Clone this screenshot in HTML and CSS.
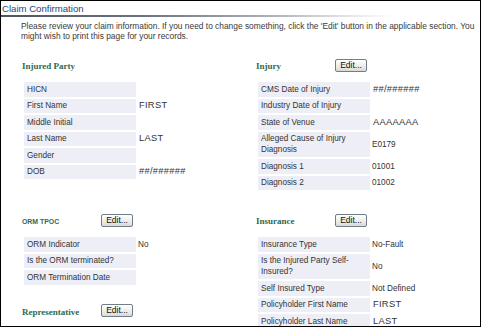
FILE: index.html
```html
<!DOCTYPE html>
<html lang="en">
<head>
<meta charset="utf-8">
<title>Claim Confirmation</title>
<link rel="stylesheet" href="styles.css">
</head>
<body>
<div class="title-bar">Claim Confirmation</div>
<div class="title-rule"></div>
<p class="intro">Please review your claim information. If you need to change something, click the 'Edit' button in the applicable section. You might wish to print this page for your records.</p>

<div class="sections">
  <section class="section">
    <div class="sec-head"><span class="sec-title">Injured Party</span></div>
    <table class="info">
      <tr><td class="lbl">HICN</td><td class="val"></td></tr>
      <tr><td class="lbl">First Name</td><td class="val big">FIRST</td></tr>
      <tr><td class="lbl">Middle Initial</td><td class="val"></td></tr>
      <tr><td class="lbl">Last Name</td><td class="val big">LAST</td></tr>
      <tr><td class="lbl">Gender</td><td class="val"></td></tr>
      <tr><td class="lbl">DOB</td><td class="val big">##/######</td></tr>
    </table>
  </section>

  <section class="section">
    <div class="sec-head"><span class="sec-title">Injury</span><button class="edit-btn" type="button">Edit...</button></div>
    <table class="info">
      <tr><td class="lbl">CMS Date of Injury</td><td class="val big">##/######</td></tr>
      <tr><td class="lbl">Industry Date of Injury</td><td class="val"></td></tr>
      <tr><td class="lbl">State of Venue</td><td class="val big">AAAAAAA</td></tr>
      <tr><td class="lbl">Alleged Cause of Injury Diagnosis</td><td class="val">E0179</td></tr>
      <tr><td class="lbl">Diagnosis 1</td><td class="val">01001</td></tr>
      <tr><td class="lbl">Diagnosis 2</td><td class="val">01002</td></tr>
    </table>
  </section>

  <div class="stack">
    <section class="section">
      <div class="sec-head"><span class="sec-title caps">ORM TPOC</span><button class="edit-btn" type="button">Edit...</button></div>
      <table class="info">
        <tr><td class="lbl">ORM Indicator</td><td class="val">No</td></tr>
        <tr><td class="lbl">Is the ORM terminated?</td><td class="val"></td></tr>
        <tr><td class="lbl">ORM Termination Date</td><td class="val"></td></tr>
      </table>
    </section>
    <section class="section rep">
      <div class="sec-head"><span class="sec-title">Representative</span><button class="edit-btn" type="button">Edit...</button></div>
    </section>
  </div>

  <section class="section">
    <div class="sec-head"><span class="sec-title">Insurance</span><button class="edit-btn" type="button">Edit...</button></div>
    <table class="info">
      <tr><td class="lbl">Insurance Type</td><td class="val">No-Fault</td></tr>
      <tr><td class="lbl">Is the Injured Party Self-Insured?</td><td class="val">No</td></tr>
      <tr><td class="lbl">Self Insured Type</td><td class="val">Not Defined</td></tr>
      <tr><td class="lbl">Policyholder First Name</td><td class="val big">FIRST</td></tr>
      <tr><td class="lbl">Policyholder Last Name</td><td class="val big">LAST</td></tr>
    </table>
  </section>
</div>
</body>
</html>
```

FILE: styles.css
```css
html, body {
  margin: 0;
  padding: 0;
}
body {
  width: 481px;
  height: 327px;
  box-sizing: border-box;
  border: 1px solid #000;
  overflow: hidden;
  background: #fff;
  font-family: "Liberation Sans", Arial, sans-serif;
  color: #333;
}
.title-bar {
  padding: 2px 0 0 1px;
  font-size: 9.6px;
  line-height: 12px;
  color: #1d437f;
}
.title-rule {
  height: 2px;
  background: linear-gradient(to right, #4e5562 0%, #6d7380 30%, #a9adb4 55%, #e2e3e5 72%, #fff 82%);
}
.intro {
  margin: 4px 0 0;
  padding: 0 1px 0 20px;
  font-size: 8.4px;
  line-height: 10px;
  color: #3a3a3a;
}
.sections {
  display: grid;
  grid-template-columns: 234px 1fr;
  row-gap: 21px;
  margin-top: 17px;
  padding-left: 21px;
  align-items: start;
}
.stack {
  display: flex;
  flex-direction: column;
}
.rep {
  margin-top: 17px;
}
.sec-head {
  display: flex;
  align-items: center;
  height: 14px;
}
.sec-title {
  width: 79px;
  flex: none;
  font-family: "Liberation Serif", "Times New Roman", serif;
  font-weight: bold;
  font-size: 9px;
  color: #2f6a50;
  padding-top: 2px;
}
.sec-title.caps {
  font-family: "Liberation Sans", Arial, sans-serif;
  font-size: 6.9px;
}
.edit-btn {
  width: 32px;
  height: 13px;
  padding: 0;
  border: 1px solid #6f7d8c;
  border-radius: 2px;
  background: linear-gradient(#ffffff, #ecebe6 60%, #d9d8d2);
  font-family: "Liberation Sans", Arial, sans-serif;
  font-size: 8.5px;
  line-height: 11px;
  color: #111;
}
.info {
  border-collapse: separate;
  border-spacing: 0 2px;
  margin: 8px 0 0 2px;
}
.info td {
  box-sizing: border-box;
  padding: 1.75px 3px;
  font-size: 8.2px;
  line-height: 11px;
  vertical-align: middle;
}
.info .lbl {
  width: 112px;
  background: #eeeef7;
  color: #333;
}
.info .val {
  padding-left: 2px;
  color: #333;
}
.info .val.big {
  padding-left: 3px;
  font-size: 9.3px;
  letter-spacing: 0.3px;
}
```
